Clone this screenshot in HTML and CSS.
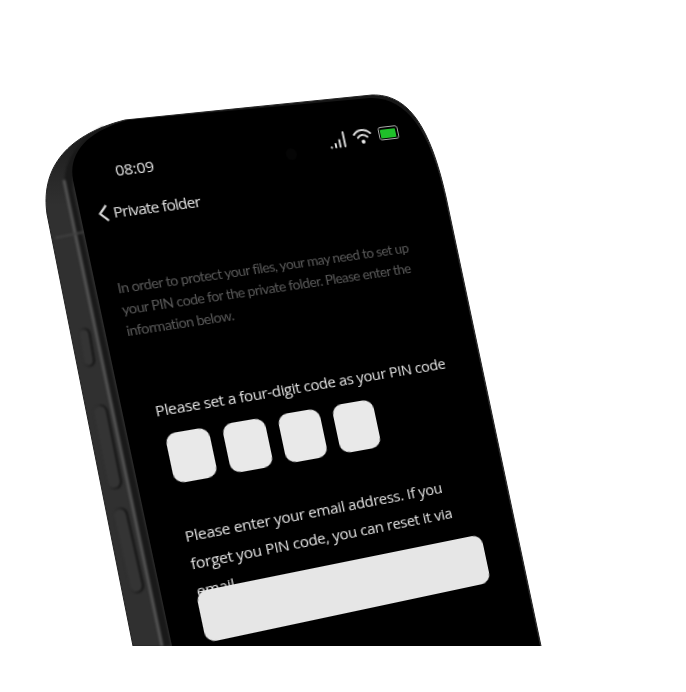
FILE: index.html
```html
<!DOCTYPE html>
<html lang="en">
<head>
<meta charset="utf-8">
<title>Private folder</title>
<link rel="stylesheet" href="styles.css">
</head>
<body>
<main class="stage">
  <svg class="body" width="686" height="646" viewBox="0 0 686 646" aria-hidden="true">
    <defs>
      <linearGradient id="side" x1="0" y1="118" x2="0" y2="205" gradientUnits="userSpaceOnUse">
        <stop offset="0" stop-color="#161616"/>
        <stop offset="0.5" stop-color="#242424"/>
        <stop offset="1" stop-color="#303030"/>
      </linearGradient>
    </defs>
    <path class="outer" d="M133 646L47 214C41 172 62 136 125 120L372 95C408 94 430 126 446 197L541 646Z"/>
    <g class="soft">
      <path class="shade" d="M167 646L69 190C66 165 78 145 105 130"/>
      <path class="strip" d="M162 646L64 180"/>
      <path class="seam" d="M55 238L84 232"/>
      <path class="btn edge" d="M85 334L89.500 361"/>
      <path class="btn face" d="M84 334L88.500 361"/>
      <path class="btn edge wide" d="M101 412L115 482"/>
      <path class="btn face wide" d="M100 412L114 482"/>
      <path class="btn edge wide" d="M121 515L137 586"/>
      <path class="btn face wide" d="M120 515L136 586"/>
    </g>
    <path class="screen" d="M172 646L73 180C68 152 88 131 128 120L370 98C406 97 430 130 445 197L540 646Z"/>
  </svg>
  <section class="plane">
    <header class="status">
      <span class="time">08:09</span>
      <span class="camera"></span>
      <span class="icons">
        <svg width="18" height="19" viewBox="0 0 18 19">
          <path class="bars" d="M1.500 17.500v-.5M6 17.500v-3.500M10.500 17.500v-7M15.500 17.500V3"/>
        </svg>
        <svg width="20" height="19" viewBox="0 0 20 19">
          <path class="arc" d="M1.500 7C6 1.500 14 1.500 18.500 7M5 10.500C8 7 12 7 15 10.500"/>
          <circle class="dot" cx="10" cy="15" r="2"/>
        </svg>
        <span class="battery"><span class="charge"></span></span>
      </span>
    </header>
    <nav class="nav">
      <svg width="12" height="19" viewBox="0 0 12 19"><path class="chev" d="M9.500 2L2.500 9.500l7 7.500"/></svg>
      <span>Private folder</span>
    </nav>
    <p class="intro">In order to protect your files, your may need to set up your PIN code for the private folder. Please enter the information below.</p>
    <p class="label">Please set a four-digit code as your PIN code</p>
    <div class="pins"><span class="pin"></span><span class="pin"></span><span class="pin"></span><span class="pin"></span></div>
    <p class="label email">Please enter your email address. If you forget you PIN code, you can reset it via email</p>
    <div class="input"></div>
  </section>
</main>
</body>
</html>
```

FILE: styles.css
```css
html, body { margin: 0; background: #fff; }
body { width: 686px; height: 692px; overflow: hidden; font-family: "Open Sans", "Noto Sans", sans-serif; }
.stage { position: relative; width: 686px; height: 646px; overflow: hidden; }
.body { position: absolute; left: 0; top: 0; filter: blur(.4px); }
.outer { fill: url(#side); stroke: #222; stroke-width: 1; }
.soft { filter: blur(.8px); }
.shade { fill: none; stroke: #191919; stroke-width: 8; }
.strip { fill: none; stroke: #555; stroke-width: 3; }
.seam { fill: none; stroke: #404040; stroke-width: 2; }
.btn { fill: none; stroke-linecap: round; }
.btn.edge { stroke: #0e0e0e; stroke-width: 11; }
.btn.face { stroke: #343434; stroke-width: 9.500; }
.btn.edge.wide { stroke-width: 14; }
.btn.face.wide { stroke-width: 12.500; }
.screen { fill: #000; }
.plane {
  position: absolute; left: 0; top: 0; width: 360px; height: 560px;
  transform-origin: 0 0;
  transform: matrix3d(1.08392,-0.08984,0,0.00020544, 0.21510,1.01933,0,-0.00000344, 0,0,1,0, 63,129,0,1);
  filter: blur(.4px);
  color: #e2e2e2;
}
.status { position: relative; display: flex; justify-content: space-between; align-items: center; height: 20px; padding: 35px 34.500px 0 40px; }
.time { font-size: 15px; line-height: 20px; letter-spacing: -.3px; }
.camera { position: absolute; left: 207px; top: 44px; width: 11px; height: 12px; border-radius: 50%; background: #050505; }
.icons { display: flex; align-items: center; gap: 7px; margin-top: -10px; }
.icons svg { display: block; }
.bars { fill: none; stroke: #ddd; stroke-width: 2; stroke-linecap: round; }
.arc { fill: none; stroke: #ddd; stroke-width: 2; stroke-linecap: round; }
.dot { fill: #eee; }
.battery { display: block; width: 21px; height: 14px; padding: 1.500px; border: 1.500px solid #aaa; border-radius: 3px; box-sizing: border-box; }
.charge { display: block; height: 100%; background: #1fc02a; border-radius: 1px; }
.nav { display: flex; align-items: center; gap: 3px; height: 20px; margin: 20px 0 0 15px; font-size: 15px; line-height: 20px; letter-spacing: -.75px; }
.chev { fill: none; stroke: #ddd; stroke-width: 2; display: block; }
.intro { width: 300px; margin: 53px 0 0 19px; font-family: "Lato", "Open Sans", sans-serif; font-size: 13.800px; line-height: 21px; letter-spacing: -.55px; color: #5a5a5a; }
.label { margin: 60px 0 0 30px; font-size: 15px; line-height: 20px; letter-spacing: -.36px; white-space: nowrap; }
.label.email { width: 275px; height: 56px; margin: 38px 0 0 33px; font-size: 15px; line-height: 27px; letter-spacing: -.27px; white-space: normal; }
.pins { display: flex; gap: 13px; margin: 14px 0 0 34px; }
.pin { width: 42px; height: 49px; border-radius: 10px; background: #e9e9e9; }
.input { position: relative; width: 291px; height: 50px; margin: 12px 0 0 32px; border-radius: 10px; background: #e6e6e6; }
```
